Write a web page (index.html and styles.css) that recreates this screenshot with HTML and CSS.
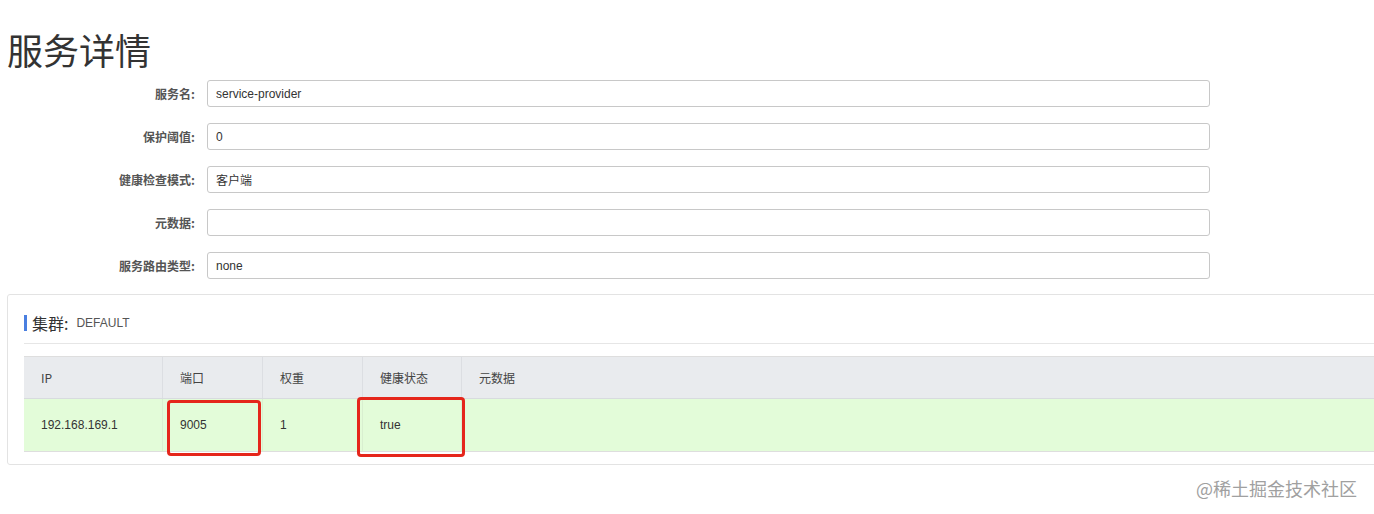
FILE: index.html
```html
<!DOCTYPE html>
<html lang="zh-CN">
<head>
    <meta charset="UTF-8">
    <meta name="viewport" content="width=device-width, initial-scale=1.0">
    <title>服务详情</title>
    <link rel="stylesheet" href="styles.css">
</head>
<body>
    <div class="page">
        <h1 class="title">服务详情</h1>

        <form class="detail-form">
            <div class="form-row">
                <label class="form-label" for="serviceName">服务名:</label>
                <input class="form-input" id="serviceName" type="text" value="service-provider" readonly>
            </div>
            <div class="form-row">
                <label class="form-label" for="protectThreshold">保护阈值:</label>
                <input class="form-input" id="protectThreshold" type="text" value="0" readonly>
            </div>
            <div class="form-row">
                <label class="form-label" for="healthCheckMode">健康检查模式:</label>
                <input class="form-input" id="healthCheckMode" type="text" value="客户端" readonly>
            </div>
            <div class="form-row">
                <label class="form-label" for="metadata">元数据:</label>
                <input class="form-input" id="metadata" type="text" value="" readonly>
            </div>
            <div class="form-row">
                <label class="form-label" for="selectorType">服务路由类型:</label>
                <input class="form-input" id="selectorType" type="text" value="none" readonly>
            </div>
        </form>

        <div class="cluster-panel">
            <div class="cluster-head">
                <span class="cluster-bar"></span>
                <span class="cluster-title">集群:</span>
                <span class="cluster-name">DEFAULT</span>
            </div>

            <table class="instance-table">
                <thead>
                    <tr>
                        <th class="col-ip">IP</th>
                        <th class="col-port">端口</th>
                        <th class="col-weight">权重</th>
                        <th class="col-health">健康状态</th>
                        <th>元数据</th>
                    </tr>
                </thead>
                <tbody>
                    <tr>
                        <td>192.168.169.1</td>
                        <td class="marked">9005<span class="mark-box mark-port"></span></td>
                        <td>1</td>
                        <td class="marked">true<span class="mark-box mark-health"></span></td>
                        <td></td>
                    </tr>
                </tbody>
            </table>
        </div>

        <div class="watermark">@稀土掘金技术社区</div>
    </div>
</body>
</html>
```

FILE: styles.css
```css
body {
    margin: 0;
    font-family: "Liberation Sans", "Noto Sans CJK SC", sans-serif;
    font-size: 12px;
    color: #333;
    background: #fff;
    overflow-x: hidden;
}
.page {
    padding: 29px 0 0 7px;
    width: 1400px;
}
.title {
    margin: 0 0 11px;
    font-family: "Noto Sans CJK SC", sans-serif;
    font-size: 36px;
    line-height: 40px;
    font-weight: normal;
    color: #333;
}
.detail-form {
    display: flex;
    flex-direction: column;
    gap: 16px;
    width: 1203px;
}
.form-row {
    display: flex;
    align-items: center;
}
.form-label {
    width: 188px;
    padding-right: 12px;
    text-align: right;
    font-family: "Noto Sans CJK SC", sans-serif;
    font-weight: bold;
    color: #555;
    font-size: 12px;
}
.form-input {
    flex: 1;
    height: 27px;
    box-sizing: border-box;
    padding: 0 8px;
    border: 1px solid #c8c8c8;
    border-radius: 3px;
    font-family: "Liberation Sans", "Noto Sans CJK SC", sans-serif;
    font-size: 12px;
    color: #333;
    outline: none;
}
.cluster-panel {
    margin-top: 15px;
    padding: 20px 16px 12px;
    border: 1px solid #e3e3e3;
    border-radius: 3px;
    width: 1420px;
}
.cluster-head {
    display: flex;
    align-items: center;
    height: 16px;
    padding-bottom: 12px;
    border-bottom: 1px solid #e6e6e6;
}
.cluster-bar {
    width: 3px;
    height: 16px;
    background: #4a7fe0;
    margin-right: 5px;
}
.cluster-title {
    font-family: "Noto Sans CJK SC", sans-serif;
    font-size: 16px;
    color: #333;
}
.cluster-name {
    margin-left: 8px;
    font-size: 12px;
    color: #555;
}
.instance-table {
    margin-top: 12px;
    width: 100%;
    border-collapse: collapse;
    border-top: 1px solid #dedede;
    border-bottom: 1px solid #dedede;
}
.instance-table th {
    height: 41px;
    padding: 0 16px 0 17px;
    text-align: left;
    font-weight: normal;
    font-family: "Noto Sans CJK SC", sans-serif;
    color: #444;
    background: #e9ebee;
    border-left: 1px solid #dcdee2;
    border-bottom: 1px solid #d8dbdf;
}
.instance-table th:first-child {
    border-left: none;
}
.instance-table td {
    height: 52px;
    padding: 0 16px 0 17px;
    background: #e3fcd9;
    color: #333;
    border-left: 1px solid #d9efd0;
}
.instance-table td:first-child {
    border-left: none;
}
.col-ip { width: 105px; }
.col-port { width: 66px; }
.col-weight { width: 66px; }
.col-health { width: 65px; }
.marked {
    position: relative;
}
/* red annotation frames drawn over the cells */
.mark-box {
    position: absolute;
    border: 3px solid #e5261b;
    border-radius: 4px;
    box-sizing: border-box;
}
.mark-port {
    left: 4px;
    top: 1px;
    width: 94px;
    height: 56px;
}
.mark-health {
    left: -6px;
    top: -2px;
    width: 108px;
    height: 60px;
}
.watermark {
    width: 1350px;
    margin-top: 10px;
    text-align: right;
    font-family: "Noto Sans CJK SC", sans-serif;
    font-size: 18px;
    color: #a0a0a0;
}
```
